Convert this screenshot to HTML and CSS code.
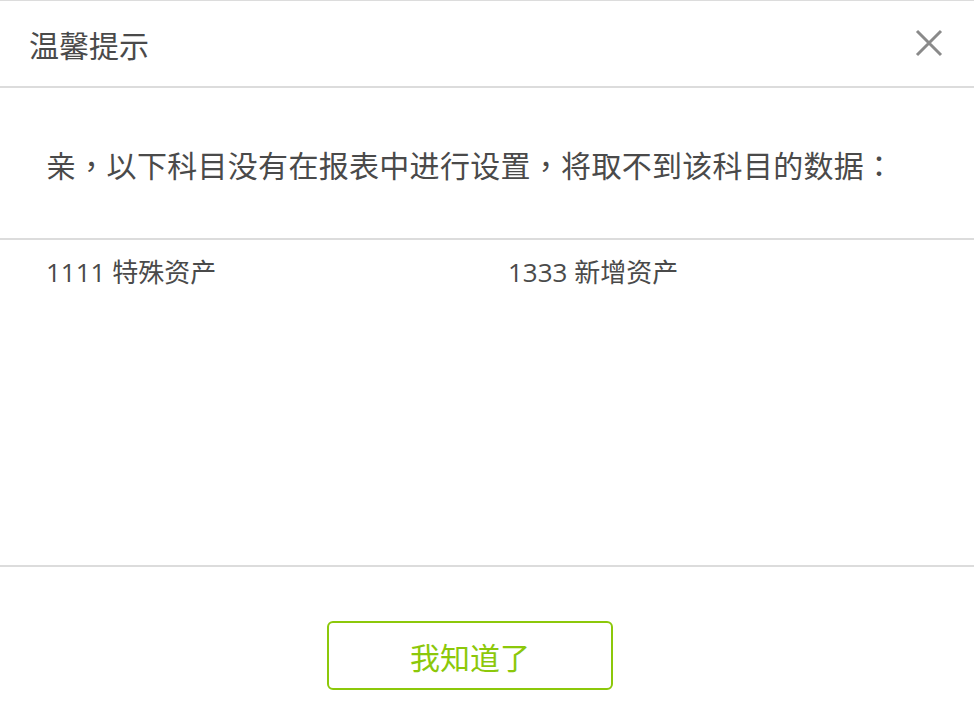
FILE: index.html
```html
<!DOCTYPE html>
<html lang="zh-CN">
<head>
    <meta charset="UTF-8">
    <meta name="viewport" content="width=device-width, initial-scale=1.0">
    <title>温馨提示</title>
    <link rel="stylesheet" href="styles.css">
</head>
<body>
    <div class="dialog">
        <div class="dialog-header">
            <span class="dialog-title">温馨提示</span>
            <span class="dialog-close">
                <svg width="28" height="28" viewBox="0 0 28 28">
                    <path d="M2 2 L26 26 M26 2 L2 26" stroke="#8a8a8a" stroke-width="3" fill="none"/>
                </svg>
            </span>
        </div>
        <div class="dialog-message" lang="zh-TW">亲，以下科目没有在报表中进行设置，将取不到该科目的数据：</div>
        <div class="subject-list">
            <div class="subject-item">1111 特殊资产</div>
            <div class="subject-item">1333 新增资产</div>
        </div>
        <div class="dialog-footer">
            <button class="btn-ok">我知道了</button>
        </div>
    </div>
</body>
</html>
```

FILE: styles.css
```css
body {
    margin: 0;
    font-family: 'Open Sans', 'Noto Sans CJK SC', sans-serif;
    color: #4a4a4a;
    background-color: #fff;
}
.dialog {
    width: 974px;
    height: 728px;
    border-top: 1px solid #dcdcdc;
    box-sizing: border-box;
}
.dialog-header {
    height: 85px;
    display: flex;
    align-items: center;
    justify-content: space-between;
    padding: 0 31px 0 29px;
    border-bottom: 2px solid #dcdcdc;
}
.dialog-title {
    font-size: 30px;
}
.dialog-close {
    display: flex;
    margin-top: -2px;
}
.dialog-message {
    height: 152px;
    box-sizing: border-box;
    padding: 57px 0 0 46px;
    font-family: 'Open Sans', 'Noto Sans CJK TC', sans-serif;
    font-size: 30px;
    line-height: 42px;
    letter-spacing: 0.3px;
    border-bottom: 2px solid #dcdcdc;
}
.subject-list {
    height: 327px;
    box-sizing: border-box;
    padding: 12px 0 0 46px;
    display: grid;
    grid-template-columns: 462px 1fr;
    align-content: start;
    border-bottom: 2px solid #dcdcdc;
}
.subject-item {
    font-size: 26px;
    line-height: 40px;
}
.dialog-footer {
    padding: 54px 0 0 327px;
}
.btn-ok {
    width: 286px;
    height: 69px;
    background-color: #fff;
    border: 2px solid #8cc80a;
    border-radius: 6px;
    color: #8cc80a;
    font-family: 'Noto Sans CJK SC', sans-serif;
    font-size: 30px;
    cursor: pointer;
}
```
